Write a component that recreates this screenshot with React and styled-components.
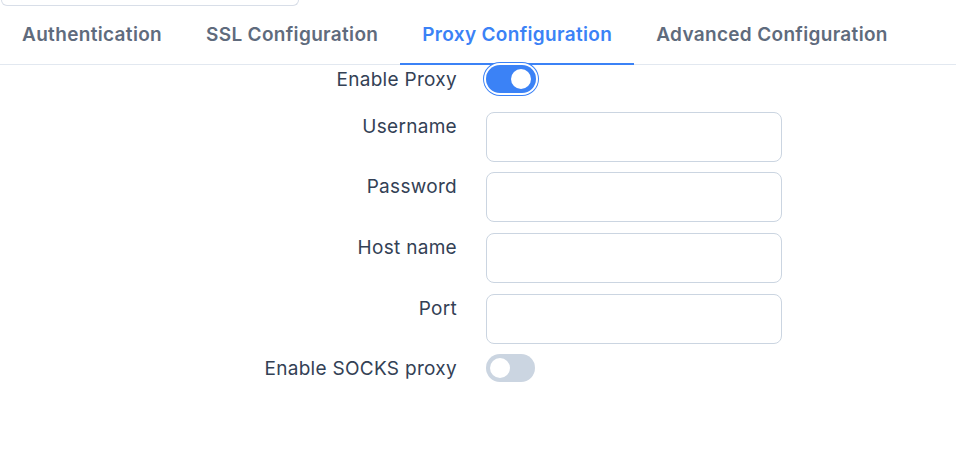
import React, { useState } from "react";
import styled, { createGlobalStyle } from "styled-components";

const Global = createGlobalStyle`
  html, body { margin: 0; padding: 0; background: #ffffff; }
  body { font-family: Inter, "Noto Sans", sans-serif; -webkit-font-smoothing: antialiased; }
  * { box-sizing: border-box; }
`;

const Page = styled.div`
  width: 956px;
  height: 462px;
  overflow: hidden;
  background: #fff;
`;

const TopBox = styled.div`
  margin-left: 1px;
  width: 298px;
  height: 6px;
  border: 1px solid #d8dee8;
  border-top: none;
  border-radius: 0 0 9px 9px;
`;

const TabBar = styled.div`
  display: flex;
  height: 59px;
  border-bottom: 1px solid #e2e8f0;
`;

const Tab = styled.button`
  all: unset;
  cursor: pointer;
  display: flex;
  align-items: center;
  padding: 0 22px;
  font-family: Inter, "Noto Sans", sans-serif;
  font-size: 19px;
  letter-spacing: 0.33px;
  font-weight: 600;
  color: ${(p) => (p.$active ? "#3b82f6" : "#5f6b7d")};
  border-bottom: 2px solid ${(p) => (p.$active ? "#3b82f6" : "transparent")};
  margin-bottom: -1px;
`;

const Form = styled.div`
  display: grid;
  grid-template-columns: 457px 296px;
  column-gap: 29px;
  row-gap: 10.67px;
`;

const Label = styled.label`
  justify-self: end;
  align-self: ${(p) => (p.$center ? "center" : "start")};
  padding-top: ${(p) => (p.$center ? "0" : "1px")};
  padding-bottom: ${(p) => p.$pb || 0}px;
  font-size: 19px;
  letter-spacing: 0.3px;
  line-height: 27px;
  color: #334155;
  white-space: nowrap;
`;

const Input = styled.input`
  width: 296px;
  height: 50px;
  border: 1px solid #cbd5e1;
  border-radius: 8px;
  background: #fff;
  outline: none;
  padding: 0 12px;
  font-size: 16px;
  font-family: inherit;
`;

const ToggleCell = styled.div`
  display: flex;
  align-items: center;
  padding-bottom: ${(p) => p.$pb || 0}px;
`;

const Track = styled.button`
  all: unset;
  position: relative;
  width: ${(p) => p.$w}px;
  height: 28px;
  border-radius: 14px;
  background: ${(p) => (p.$on ? "#3b82f6" : "#cbd5e1")};
  box-shadow: ${(p) => (p.$focus ? "0 0 0 2px #fff, 0 0 0 3px #3b82f6" : "none")};
  cursor: pointer;
`;

const Thumb = styled.span`
  position: absolute;
  top: 4px;
  left: ${(p) => (p.$on ? p.$w - 25 : 4)}px;
  width: 20px;
  height: 20px;
  border-radius: 50%;
  background: #fff;
`;

function Toggle({ on, focus, w }) {
  return (
    <Track $on={on} $focus={focus} $w={w} role="switch" aria-checked={on}>
      <Thumb $on={on} $w={w} />
    </Track>
  );
}

export default function App() {
  const tabs = ["Authentication", "SSL Configuration", "Proxy Configuration", "Advanced Configuration"];
  const [active, setActive] = useState(2);
  return (
    <Page>
      <Global />
      <TopBox />
      <TabBar>
        {tabs.map((t, i) => (
          <Tab key={t} $active={i === active} onClick={() => setActive(i)}>
            {t}
          </Tab>
        ))}
      </TabBar>
      <Form>
        <Label $center $pb={8}>Enable Proxy</Label>
        <ToggleCell $pb={8}>
          <Toggle on focus w={50} />
        </ToggleCell>
        <Label>Username</Label>
        <Input />
        <Label>Password</Label>
        <Input type="password" />
        <Label>Host name</Label>
        <Input />
        <Label>Port</Label>
        <Input />
        <Label $center>Enable SOCKS proxy</Label>
        <ToggleCell>
          <Toggle on={false} w={49} />
        </ToggleCell>
      </Form>
    </Page>
  );
}
